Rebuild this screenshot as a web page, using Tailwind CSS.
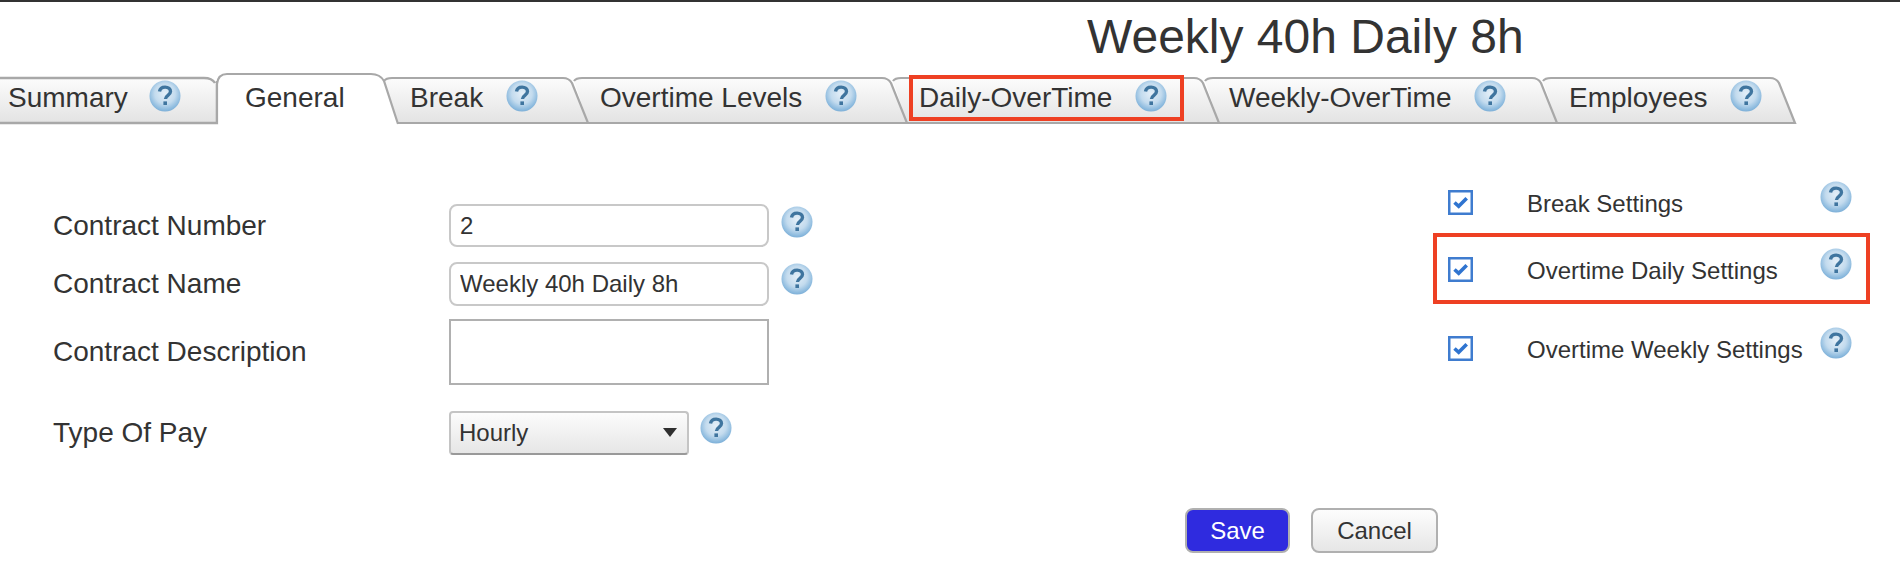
<!DOCTYPE html>
<html lang="en">
<head>
<meta charset="utf-8">
<title>Weekly 40h Daily 8h</title>
<script src="https://cdn.jsdelivr.net/npm/@tailwindcss/browser@4"></script>
</head>
<body class="bg-white text-[#333] font-['Liberation_Sans',Arial,sans-serif] overflow-hidden">
<svg width="0" height="0" class="absolute">
  <defs>
    <linearGradient id="tabfill" x1="0" y1="0" x2="0" y2="1">
      <stop offset="0" stop-color="#fcfcfc"/>
      <stop offset="1" stop-color="#e3e3e3"/>
    </linearGradient>
    <radialGradient id="orb" cx="0.5" cy="0.42" r="0.6">
      <stop offset="0" stop-color="#e4eff8"/>
      <stop offset="0.55" stop-color="#c3dbee"/>
      <stop offset="0.85" stop-color="#8fbcdf"/>
      <stop offset="1" stop-color="#78acd6"/>
    </radialGradient>
    <symbol id="help" viewBox="0 0 32 32">
      <circle cx="16" cy="16" r="15.5" fill="url(#orb)"/>
      <path d="M10.5 11.5c.5-3 2.8-4.4 5.6-4.4 3.2 0 5.4 1.8 5.4 4.4 0 2-1.2 3-2.8 4.2-1.4 1-2.2 1.8-2.2 3.4" fill="none" stroke="#3f759f" stroke-width="3.4"/>
      <rect x="14.4" y="21.4" width="3.6" height="3.6" fill="#3f759f"/>
    </symbol>
    <symbol id="check" viewBox="0 0 25 25">
      <rect x="1.25" y="1.25" width="22.5" height="22.5" fill="#fff" stroke="#3f7ccf" stroke-width="2.5"/>
      <path d="M6.5 12.5l4.2 3.8 8-8" fill="none" stroke="#2f74d0" stroke-width="3.6"/>
    </symbol>
  </defs>
</svg>

<div class="h-[2px] bg-[#333]"></div>

<h1 class="h-[75px] pl-[1087px] text-[48px] leading-[70px] whitespace-nowrap">Weekly 40h Daily 8h</h1>

<!-- tabs -->
<nav class="flex h-[47px] text-[28px] leading-[41px] whitespace-nowrap">
  <div class="relative z-10 w-[217px] pl-[8px]">
    <svg class="absolute left-0 top-0 overflow-visible" width="217" height="47"><path d="M-4 1H204Q212 1 215 6L217 10V46H-4Z" fill="url(#tabfill)"/><path d="M-4 1H204Q212 1 215 6M217 4V46H-4" fill="none" stroke="#a8a8a8" stroke-width="2.4"/></svg>
    <span class="relative inline-flex items-center h-[41px]">Summary<svg class="ml-[21px] mt-[-3px]" width="32" height="32"><use href="#help"/></svg></span>
  </div>
  <div class="relative z-30 w-[181px] pl-[28px]">
    <svg class="absolute left-0 top-[-4px] overflow-visible" width="181" height="51"><path d="M0 51V11Q1 1 10 1H154Q163 1 167 8L181 51Z" fill="#fff"/><path d="M0 51V11Q1 1 10 1H154Q163 1 167 8L181 51" fill="none" stroke="#a8a8a8" stroke-width="2.2"/></svg>
    <span class="relative">General</span>
  </div>
  <div class="relative z-20 w-[190px] pl-[12px]">
    <svg class="absolute left-0 top-0 overflow-visible" width="190" height="47"><path d="M-14 4Q-12 1 -6 1H165Q171 1 174 6L190 46H0Z" fill="url(#tabfill)"/><path d="M-14 4Q-12 1 -6 1H165Q171 1 174 6L190 46H0" fill="none" stroke="#a8a8a8" stroke-width="2.2"/></svg>
    <span class="relative inline-flex items-center h-[41px]">Break<svg class="ml-[23px] mt-[-3px]" width="32" height="32"><use href="#help"/></svg></span>
  </div>
  <div class="relative z-[19] w-[319px] pl-[12px]">
    <svg class="absolute left-0 top-0 overflow-visible" width="319" height="47"><path d="M-14 4Q-12 1 -6 1H294Q300 1 303 6L319 46H0Z" fill="url(#tabfill)"/><path d="M-14 4Q-12 1 -6 1H294Q300 1 303 6L319 46H0" fill="none" stroke="#a8a8a8" stroke-width="2.2"/></svg>
    <span class="relative inline-flex items-center h-[41px]">Overtime Levels<svg class="ml-[23px] mt-[-3px]" width="32" height="32"><use href="#help"/></svg></span>
  </div>
  <div class="relative z-[18] w-[312px] pl-[12px]">
    <svg class="absolute left-0 top-0 overflow-visible" width="312" height="47"><path d="M-14 4Q-12 1 -6 1H287Q293 1 296 6L312 46H0Z" fill="url(#tabfill)"/><path d="M-14 4Q-12 1 -6 1H287Q293 1 296 6L312 46H0" fill="none" stroke="#a8a8a8" stroke-width="2.2"/></svg>
    <span class="relative inline-flex items-center h-[41px]">Daily-OverTime<svg class="ml-[23px] mt-[-3px]" width="32" height="32"><use href="#help"/></svg></span>
    <div class="absolute left-[2px] right-[35px] top-[-2px] bottom-[3px] border-[4px] border-[#ee4023]"></div>
  </div>
  <div class="relative z-[17] w-[338px] pl-[10px]">
    <svg class="absolute left-0 top-0 overflow-visible" width="338" height="47"><path d="M-14 4Q-12 1 -6 1H313Q319 1 322 6L338 46H0Z" fill="url(#tabfill)"/><path d="M-14 4Q-12 1 -6 1H313Q319 1 322 6L338 46H0" fill="none" stroke="#a8a8a8" stroke-width="2.2"/></svg>
    <span class="relative inline-flex items-center h-[41px]">Weekly-OverTime<svg class="ml-[23px] mt-[-3px]" width="32" height="32"><use href="#help"/></svg></span>
  </div>
  <div class="relative z-[16] w-[238px] pl-[12px]">
    <svg class="absolute left-0 top-0 overflow-visible" width="238" height="47"><path d="M-14 4Q-12 1 -6 1H213Q219 1 222 6L238 46H0Z" fill="url(#tabfill)"/><path d="M-14 4Q-12 1 -6 1H213Q219 1 222 6L238 46H0" fill="none" stroke="#a8a8a8" stroke-width="2.2"/></svg>
    <span class="relative inline-flex items-center h-[41px]">Employees<svg class="ml-[22px] mt-[-3px]" width="32" height="32"><use href="#help"/></svg></span>
  </div>
</nav>

<main class="flex items-start pt-[57px]">
  <!-- form -->
  <form class="w-[1448px] pl-[53px] pt-[23px] flex flex-col text-[28px]">
    <div class="flex items-start h-[43px]">
      <label class="w-[396px] self-center">Contract Number</label>
      <input value="2" class="w-[320px] h-full border-2 border-[#c8c8c8] rounded-[8px] px-[9px] text-[24px] text-[#333]">
      <svg class="ml-[12px] mt-[2px]" width="32" height="32"><use href="#help"/></svg>
    </div>
    <div class="flex items-start h-[44px] mt-[15px]">
      <label class="w-[396px] self-center">Contract Name</label>
      <input value="Weekly 40h Daily 8h" class="w-[320px] h-full border-2 border-[#c8c8c8] rounded-[8px] px-[9px] text-[24px] text-[#333]">
      <svg class="ml-[12px] mt-[1px]" width="32" height="32"><use href="#help"/></svg>
    </div>
    <div class="flex items-start h-[66px] mt-[13px]">
      <label class="w-[396px] self-center">Contract Description</label>
      <div class="w-[320px] h-full border-2 border-[#b0b0b0]"></div>
    </div>
    <div class="flex items-start h-[44px] mt-[26px]">
      <label class="w-[396px] self-center">Type Of Pay</label>
      <div class="relative w-[240px] h-full border-2 border-[#c4c4c4] border-b-[#999] rounded-[4px] bg-gradient-to-b from-[#fcfcfc] to-[#e6e6e6] pl-[8px] text-[24px] leading-[40px]">Hourly
        <svg class="absolute right-[9px] top-[14px]" width="16" height="11" viewBox="0 0 16 11"><path d="M1 1H15L8 10Z" fill="#2f2f2f"/></svg>
      </div>
      <svg class="ml-[11px] mt-[1px]" width="32" height="32"><use href="#help"/></svg>
    </div>
  </form>

  <!-- settings -->
  <div class="text-[24px] flex flex-col">
    <div class="grid grid-cols-[79px_293px_32px] items-center h-[44px]">
      <svg class="-mt-[1px]" width="25" height="25"><use href="#check"/></svg>
      <span class="mt-[1px]">Break Settings</span>
      <svg class="self-start" width="32" height="32"><use href="#help"/></svg>
    </div>
    <div class="relative grid grid-cols-[79px_293px_32px] items-center h-[44px] mt-[23px]">
      <svg class="-mt-[1px]" width="25" height="25"><use href="#check"/></svg>
      <span class="mt-[1px]">Overtime Daily Settings</span>
      <svg class="self-start" width="32" height="32"><use href="#help"/></svg>
      <div class="absolute left-[-15px] right-[-18px] top-[-15px] bottom-[-12px] border-[4px] border-[#ee4023]"></div>
    </div>
    <div class="grid grid-cols-[79px_293px_32px] items-center h-[44px] mt-[35px]">
      <svg class="-mt-[1px]" width="25" height="25"><use href="#check"/></svg>
      <span class="whitespace-nowrap mt-[1px]">Overtime Weekly Settings</span>
      <svg class="self-start" width="32" height="32"><use href="#help"/></svg>
    </div>
  </div>
</main>

<div class="flex gap-[21px] pl-[1185px] mt-[53px] text-[24px]">
  <button class="w-[105px] h-[45px] rounded-[8px] border-2 border-[#b0b0b0] bg-[#2f2bdf] text-white">Save</button>
  <button class="w-[127px] h-[45px] rounded-[8px] border-2 border-[#b0b0b0] bg-gradient-to-b from-[#fdfdfd] to-[#e6e6e6] text-[#333]">Cancel</button>
</div>
</body>
</html>
